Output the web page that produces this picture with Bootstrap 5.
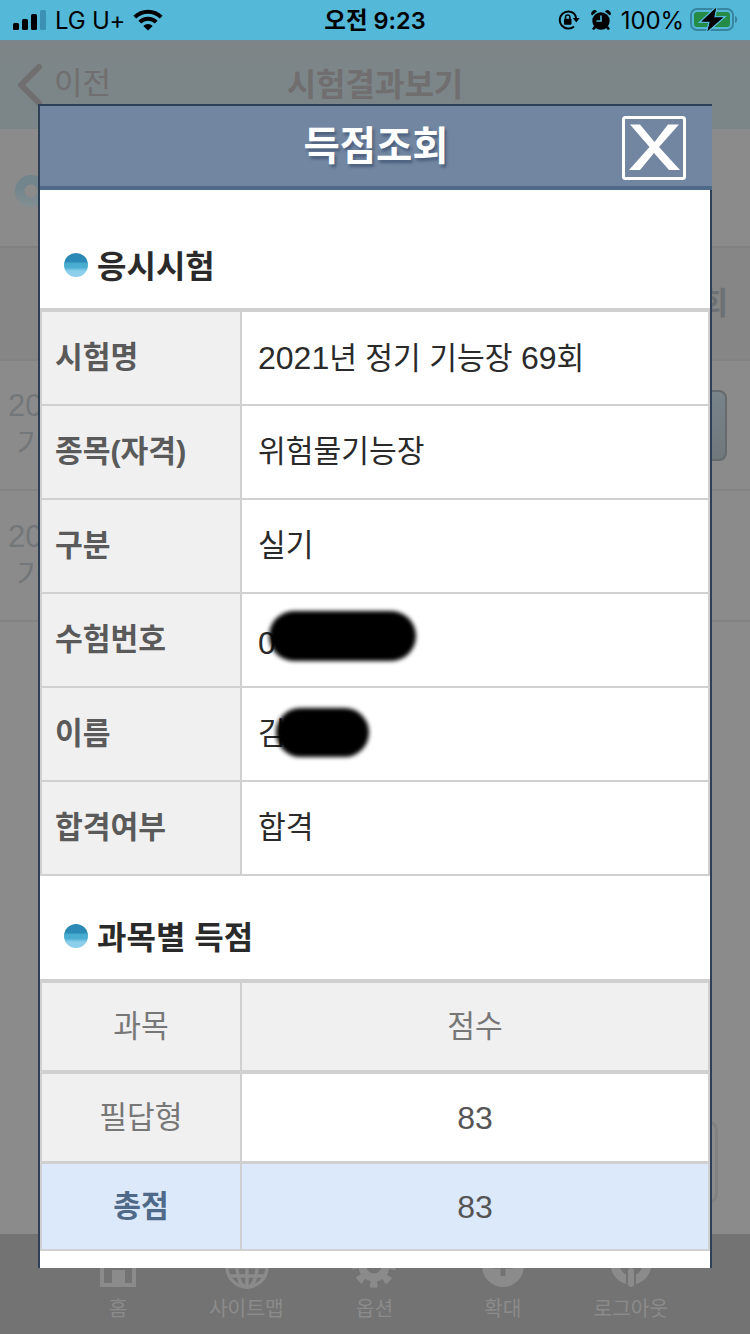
<!DOCTYPE html>
<html lang="ko">
<head>
<meta charset="utf-8">
<meta name="viewport" content="width=device-width, initial-scale=1">
<title>득점조회</title>
<link href="https://cdn.jsdelivr.net/npm/bootstrap@5.3.0/dist/css/bootstrap.min.css" rel="stylesheet">
<style>
  body{font-family:"Liberation Sans","Noto Sans CJK KR",sans-serif;background:#8b8b8b;line-height:1}
  .screen{width:750px;height:1334px}
  .status{height:40px;background:#54b8d9;color:#000;font:24px/40px Inter,"Noto Sans CJK KR",sans-serif;padding:0 11px 0 13px;z-index:3}
  .carrier,.pct{padding-top:2px}
  .carrier{letter-spacing:-.2px}
  .pct{margin:0 6px 0 10px;letter-spacing:-.1px}
  .clock{font-weight:600;font-size:23.5px;padding-top:1px}
  .topbar{height:89px;background:linear-gradient(#7d8587,#7b8689);border-top:1px solid #76868f;color:#706e6e;font-size:31px;padding-left:17px}
  .topbar .pagename{font-size:32px;font-weight:700;left:0;right:0}
  .back{margin-left:11px;padding-bottom:4px}
  .under-head{height:117px;padding:6px 0 0 15px}
  .ring{width:32px;height:32px;border-radius:50%;background:radial-gradient(circle,#8b8b8b 0 6px,transparent 7px),linear-gradient(#72858c 40%,#838f93)}
  .dim-row{border-bottom:2px solid #838383;color:#737779;font-size:31px;line-height:39px}
  .dim-row.head{height:115px;background:#868686;border-top:2px solid #818181;color:#6d7173;padding-right:22px}
  .dim-btn{width:52px;height:71px;border-radius:8px;border:2px solid #646a6d;background:linear-gradient(#78838a,#70787c);margin-right:15px}
  .dim-btn2{width:52px;height:84px;border-radius:10px;border:3px solid #818181}
  .tabbar{height:100px;background:#737373;color:#8b8b8b;font-size:20.3px;padding:0 55px 0 54px}
  .tabbar > div{width:128.2px}
  .tabbar span{display:block;padding-top:9px}
  .sheet{left:38px;top:104px;width:674px;height:1164px;background:#fff;border:2px solid #2e4058;border-bottom:0;z-index:2}
  .sheet-head{height:84px;width:672px;background:#7286a1;border-bottom:4px solid #4f6a89;color:#fff;font-size:39.4px;font-weight:700;text-shadow:2px 3px 3px #4a5f7c}
  .sheet-title{padding-top:2px}
  .sheet-close{right:26px;top:10px;width:64px;height:64px}
  .sec{color:#2a2a2a;font-size:32px;font-weight:700;padding-left:24px}
  .sec span{padding-top:6px}
  .ball{width:24px;height:24px;border-radius:50%;background:linear-gradient(#2b89b5 0 35%,#4aaed2 45% 60%,#8ccfeb 75%);margin-right:9px}
  .grid-box{border:2px solid #d0d0d0;border-top:4px solid #d0d0d0;border-bottom:0}
  .line{border-bottom:2px solid #d0d0d0;height:94px;font-size:30.2px;color:#2a2a2a}
  .cap{width:200px;border-right:2px solid #d0d0d0;background:#f0f0f0;color:#5a5a5a;font-weight:700;padding:1px 0 0 13px}
  .val{padding:1px 0 0 16px}
  .num{font-size:32px}
  .pts .line{color:#777}
  .pts .cap{font-weight:400;color:#777;padding:2px 0 0}
  .pts .num{color:#555;padding-top:1px}
  .pts .sum,.pts .sum .cap{background:#dce9fb}
  .pts .sum .cap{color:#4f6a89;font-weight:700}
  .ink{background:#000;border-radius:26px;filter:blur(2px)}
  svg{display:block}
</style>
</head>
<body>
<div class="screen position-relative overflow-hidden d-flex flex-column">

  <header class="status d-flex align-items-center position-relative">
    <svg width="34" height="22" viewBox="0 0 34 22"><g><rect x="0" y="14" width="6" height="7" rx="1.5"/><rect x="9" y="10" width="6" height="11" rx="1.5"/><rect x="18" y="5" width="6" height="16" rx="1.5"/><rect x="27" y="1" width="6" height="20" rx="1.5" fill="#3c90b3"/></g></svg>
    <span class="ms-2 carrier">LG U+</span>
    <svg class="ms-2" width="30" height="22" viewBox="0 0 30 22" fill="none" stroke="#000" stroke-width="4"><path d="M1.8 8.2a18.5 18.5 0 0 1 26.4 0M6.8 13.2a11.6 11.6 0 0 1 16.4 0"/><path d="M15 21.5l-4.7-4.6a6.8 6.8 0 0 1 9.4 0z" fill="#000" stroke="none"/></svg>
    <span class="clock position-absolute start-0 end-0 text-center">오전 9:23</span>
    <div class="ms-auto d-flex align-items-center">
      <svg width="22" height="20" viewBox="0 0 22 20"><path d="M16.5 4A8.6 8.6 0 1 0 16 16.500M15.500 3A8.600 8.600 0 0 1 18.300 9" fill="none" stroke="#000" stroke-width="2"/><path d="M14.800 8h6.800l-3.300 4.600z"/><rect x="6" y="8.800" width="7.500" height="6" rx="1"/><path d="M7.500 9V7.200a2.200 2.200 0 0 1 4.400 0V9" fill="none" stroke="#000" stroke-width="1.500"/></svg>
      <svg style="margin-left:11px" width="20" height="21" viewBox="0 0 20 21"><circle cx="10" cy="11" r="8.700"/><path d="M1 5.500A3 3 0 0 1 6 1.500zM19 5.500a3 3 0 0 0-5-4zM3 16l-2 3 2 1 3-3zM17 16l2 3-2 1-3-3z"/><path d="M10 5.500V11H5.500" fill="none" stroke="#54b8d9" stroke-width="1.600"/></svg>
      <span class="pct">100%</span>
      <svg width="49" height="24" viewBox="0 0 49 24"><rect x="1" y="1" width="42" height="21" rx="6" fill="none" stroke="#38859f" stroke-width="2"/><rect x="4" y="4" width="36" height="15" rx="3" fill="#268c45"/><path d="M45 8c3 1 3 6 0 7z" fill="#38859f"/><path d="M26 0L11.500 13.500h8.500L17.500 23 33 9.500h-9z" stroke="#54b8d9" stroke-width="3" paint-order="stroke"/><path d="M26 0L11.500 13.500h8.500L17.500 23 33 9.500h-9z"/></svg>
    </div>
  </header>

  <nav class="topbar d-flex align-items-center position-relative">
    <svg width="26" height="42" viewBox="0 0 26 42"><path d="M22 3L4 21l18 18" fill="none" stroke="#706e6e" stroke-width="6" stroke-linecap="round" stroke-linejoin="round"/></svg>
    <span class="back">이전</span>
    <span class="pagename position-absolute text-center">시험결과보기</span>
  </nav>

  <main class="flex-grow-1 d-flex flex-column" aria-hidden="true">
    <div class="under-head d-flex align-items-center"><div class="ring"></div></div>
    <div class="dim-row head d-flex align-items-center justify-content-end"><b>회</b></div>
    <div class="dim-row d-flex justify-content-between align-items-center px-2" style="height:130px">
      <div>20<br>&nbsp;기</div><div class="dim-btn"></div>
    </div>
    <div class="dim-row px-2 d-flex align-items-center" style="height:131px"><div>20<br>&nbsp;기</div></div>
    <div class="mt-auto d-flex justify-content-end pe-3 me-3" style="padding-bottom:30px"><div class="dim-btn2"></div></div>
  </main>

  <footer class="tabbar d-flex text-center">
    <div><svg class="mx-auto mt-2" width="48" height="48" viewBox="0 0 48 48"><path d="M24 2L2 20h6v24h32V20h6z" fill="none" stroke="#8b8b8b" stroke-width="4" transform="translate(0 -1)"/><path d="M18 45V28h13v17z" fill="#8b8b8b"/></svg><span>홈</span></div>
    <div><svg class="mx-auto mt-2" width="48" height="48" viewBox="0 0 48 48" fill="none" stroke="#8b8b8b" stroke-width="3.400"><g transform="translate(1 1)"><circle cx="24" cy="24" r="20"/><ellipse cx="24" cy="24" rx="10" ry="20"/><path d="M24 4v40M4 24h40M7 33h34M7 15h34"/></g></svg><span>사이트맵</span></div>
    <div><svg class="mx-auto mt-2" width="48" height="48" viewBox="0 0 48 48" fill="none" stroke="#8b8b8b"><circle cx="24" cy="24" r="11.500" stroke-width="8"/><circle cx="24" cy="24" r="18.200" stroke-width="7" stroke-dasharray="7.150 7.150" stroke-dashoffset="3.500"/></svg><span>옵션</span></div>
    <div><svg class="mx-auto mt-2" width="48" height="48" viewBox="0 0 48 48"><circle cx="24" cy="24" r="21" fill="#8b8b8b"/><path d="M24 14v20M14 24h20" stroke="#737373" stroke-width="5"/></svg><span>확대</span></div>
    <div><svg class="mx-auto mt-2" width="48" height="48" viewBox="0 0 48 48" fill="none"><circle cx="24" cy="22" r="16" stroke="#8b8b8b" stroke-width="9"/><path d="M24 25v20" stroke="#737373" stroke-width="10"/><path d="M24 29v13" stroke="#8b8b8b" stroke-width="6" stroke-linecap="round"/></svg><span>로그아웃</span></div>
  </footer>

  <section class="sheet position-absolute">
    <div class="sheet-head d-flex align-items-center justify-content-center position-relative">
      <span class="sheet-title">득점조회</span>
      <svg class="sheet-close position-absolute" viewBox="0 0 64 64"><rect x="1.500" y="1.500" width="61" height="61" rx="2" fill="none" stroke="#fff" stroke-width="3"/><path d="M8 8.500h10l14.500 17.500L46 8.500h11L37 31l21 23H47L32 37 18 54H7l20.500-23z" fill="#fff"/></svg>
    </div>
    <h2 class="sec d-flex align-items-center mb-0" style="height:118px;padding-top:31px"><i class="ball"></i><span>응시시험</span></h2>
    <div class="grid-box">
      <div class="line d-flex"><div class="cap d-flex align-items-center">시험명</div><div class="val d-flex align-items-center"><span><span class="num">2021</span>년 정기 기능장 <span class="num">69</span>회</span></div></div>
      <div class="line d-flex"><div class="cap d-flex align-items-center">종목(자격)</div><div class="val d-flex align-items-center">위험물기능장</div></div>
      <div class="line d-flex"><div class="cap d-flex align-items-center">구분</div><div class="val d-flex align-items-center">실기</div></div>
      <div class="line d-flex"><div class="cap d-flex align-items-center">수험번호</div><div class="val d-flex align-items-center position-relative"><span class="num pt-1">0</span><div class="ink position-absolute" style="left:27px;top:17px;width:147px;height:50px"></div></div></div>
      <div class="line d-flex"><div class="cap d-flex align-items-center">이름</div><div class="val d-flex align-items-center position-relative">김<div class="ink position-absolute" style="left:34px;top:20px;width:93px;height:49px"></div></div></div>
      <div class="line d-flex"><div class="cap d-flex align-items-center">합격여부</div><div class="val d-flex align-items-center">합격</div></div>
    </div>
    <h2 class="sec d-flex align-items-center mb-0" style="height:103px;padding-top:16px"><i class="ball"></i><span>과목별 득점</span></h2>
    <div class="grid-box pts">
      <div class="line d-flex" style="height:91px;border-bottom-width:4px"><div class="cap d-flex align-items-center justify-content-center">과목</div><div class="flex-grow-1 d-flex align-items-center justify-content-center" style="background:#f0f0f0;padding-top:2px">점수</div></div>
      <div class="line d-flex" style="height:90px;border-bottom-width:3px"><div class="cap d-flex align-items-center justify-content-center">필답형</div><div class="flex-grow-1 d-flex align-items-center justify-content-center"><span class="num">83</span></div></div>
      <div class="line sum d-flex" style="height:87px"><div class="cap d-flex align-items-center justify-content-center">총점</div><div class="flex-grow-1 d-flex align-items-center justify-content-center"><span class="num">83</span></div></div>
    </div>
  </section>
</div>
<script src="https://cdn.jsdelivr.net/npm/bootstrap@5.3.0/dist/js/bootstrap.bundle.min.js"></script>
</body>
</html>
